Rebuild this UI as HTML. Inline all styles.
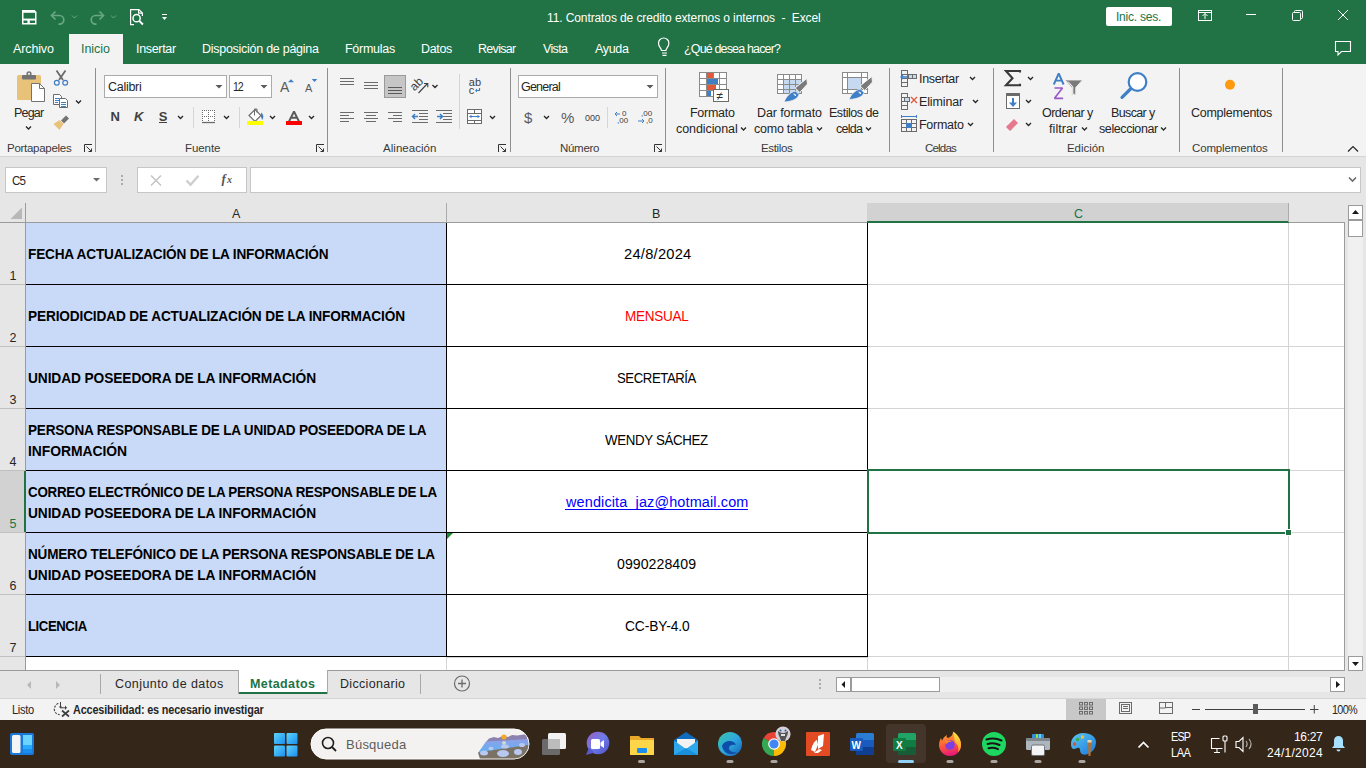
<!DOCTYPE html>
<html><head><meta charset="utf-8"><style>
html,body{margin:0;padding:0;width:1366px;height:768px;overflow:hidden;background:#fff;}
body>div,body>svg{position:absolute;}
.t{position:absolute;font-family:"Liberation Sans",sans-serif;white-space:pre;line-height:1;}
.t{line-height:normal;}
svg{overflow:visible}
</style></head><body>
<div style="left:0px;top:0px;width:1366px;height:64px;background:#217346;"></div><div style="left:69px;top:34px;width:54px;height:30px;background:#f3f3f3;"></div><div style="left:0px;top:64px;width:1366px;height:92px;background:#f3f3f3;"></div><div style="left:0px;top:156px;width:1366px;height:1px;background:#d4d4d4;"></div><div style="left:0px;top:157px;width:1366px;height:46px;background:#e6e6e6;"></div><div style="left:1106px;top:7px;width:66px;height:19px;background:#ffffff;border-radius:2px"></div><svg style="left:0;top:0" width="1366" height="64" viewBox="0 0 1366 64">
<g fill="none" stroke="#fff" stroke-width="1.5">
 <path d="M22.75 10.75h11.5l1.5 1.5v11.5h-13z"/>
</g>
<rect x="23" y="10.5" width="12" height="2.3" fill="#fff"/>
<rect x="23" y="18.6" width="12" height="1.9" fill="#fff"/>
<rect x="27.4" y="20" width="2.4" height="3" fill="#fff"/>
<g fill="none" stroke="#6aa784" stroke-width="1.7">
 <path d="M52.5 15.5h7a4.3 4.3 0 0 1 0 8.6h-1"/>
 <path d="M72 15.5l2.5 2.5 2.5-2.5" stroke-width="1"/>
 <path d="M102.5 15.5h-7a4.3 4.3 0 0 0 0 8.6h1"/>
 <path d="M111 15.5l2.5 2.5 2.5-2.5" stroke-width="1"/>
</g>
<path d="M55.5 11.5l-4 4 4 4" fill="none" stroke="#6aa784" stroke-width="1.7"/>
<path d="M99.5 11.5l4 4-4 4" fill="none" stroke="#6aa784" stroke-width="1.7"/>
<g fill="none" stroke="#fff" stroke-width="1.2">
 <path d="M134 24.6h-3.4V9.6h8.3l3.5 3.5v3"/><path d="M138.6 9.6v3.5h3.5"/>
 <circle cx="136.6" cy="18.2" r="3.6" stroke-width="1.5"/><path d="M139.3 20.9l3.6 3.6" stroke-width="2"/>
</g>
<rect x="162" y="14" width="5" height="1" fill="#fff"/>
<path d="M162 17h5l-2.5 3z" fill="#fff"/>
<!-- window controls -->
<g fill="none" stroke="#fff" stroke-width="1">
 <rect x="1198.5" y="10.5" width="13" height="10"/><path d="M1198.5 12.5h13"/><path d="M1205 19v-5.5M1202.5 16l2.5-2.5 2.5 2.5"/>
 <path d="M1246 14.5h10"/>
 <rect x="1292.5" y="12.5" width="8" height="8" rx="1"/><path d="M1294.5 12.5v-1a1 1 0 0 1 1-1h6a1 1 0 0 1 1 1v6a1 1 0 0 1-1 1h-1"/>
 <path d="M1338 10l10 10M1348 10l-10 10"/>
 <path d="M1335.5 41.5h15v10h-9l-3.5 3.5v-3.5h-2.5z" stroke-width="1.1"/>
</g>
<!-- bulb -->
<g fill="none" stroke="#fff" stroke-width="1.2">
 <path d="M661.5 50.5c-.3-2.5-3-3.8-3-7.3a5.2 5.2 0 0 1 10.4 0c0 3.5-2.7 4.8-3 7.3z"/>
 <path d="M662 53h5M662.5 55.3h4"/>
</g>
</svg><div style="left:95px;top:68px;width:1px;height:84px;background:#8f8f8f;"></div><div style="left:327px;top:68px;width:1px;height:84px;background:#8f8f8f;"></div><div style="left:510px;top:68px;width:1px;height:84px;background:#8f8f8f;"></div><div style="left:665px;top:68px;width:1px;height:84px;background:#8f8f8f;"></div><div style="left:889px;top:68px;width:1px;height:84px;background:#8f8f8f;"></div><div style="left:993px;top:68px;width:1px;height:84px;background:#8f8f8f;"></div><div style="left:1179px;top:68px;width:1px;height:84px;background:#8f8f8f;"></div><div style="left:1282px;top:68px;width:1px;height:84px;background:#8f8f8f;"></div><div style="left:193px;top:107px;width:1px;height:21px;background:#d6d6d6;"></div><div style="left:239px;top:107px;width:1px;height:21px;background:#d6d6d6;"></div><div style="left:459px;top:74px;width:1px;height:55px;background:#d6d6d6;"></div><div style="left:607px;top:107px;width:1px;height:21px;background:#d6d6d6;"></div><div style="left:104px;top:75px;width:121px;height:21px;background:#fff;border:1px solid #ababab"></div><div style="left:229px;top:75px;width:41px;height:21px;background:#fff;border:1px solid #ababab"></div><div style="left:518px;top:75px;width:138px;height:21px;background:#fff;border:1px solid #ababab"></div><svg style="left:0;top:64px" width="1366" height="92" viewBox="0 64 1366 92">
<!-- chevrons -->
<g fill="none" stroke="#262626" stroke-width="1.3">
 <path d="M26 126.5l2.5 2.5 2.5-2.5"/>
 <path d="M76 100.5l2.5 2.5 2.5-2.5"/>
 <path d="M178 116l2.5 2.5 2.5-2.5"/><path d="M224 116l2.5 2.5 2.5-2.5"/><path d="M270 116l2.5 2.5 2.5-2.5"/><path d="M309 116l2.5 2.5 2.5-2.5"/>
 <path d="M432.5 85l2.5 2.5 2.5-2.5"/><path d="M490 116l2.5 2.5 2.5-2.5"/>
 <path d="M544 116l2.5 2.5 2.5-2.5"/>
 <path d="M741 127.5l2.5 2.5 2.5-2.5"/><path d="M817 127.5l2.5 2.5 2.5-2.5"/><path d="M866 127.5l2.5 2.5 2.5-2.5"/>
 <path d="M970 77l2.5 2.5 2.5-2.5"/><path d="M973 100l2.5 2.5 2.5-2.5"/><path d="M968 123l2.5 2.5 2.5-2.5"/>
 <path d="M1028 77l2.5 2.5 2.5-2.5"/><path d="M1026 100l2.5 2.5 2.5-2.5"/><path d="M1026 123l2.5 2.5 2.5-2.5"/>
 <path d="M1082 127.5l2.5 2.5 2.5-2.5"/><path d="M1161 127.5l2.5 2.5 2.5-2.5"/>
 <path d="M1348 151.5l5-5 5 5" stroke-width="1.2"/>
</g>
<!-- combo arrows -->
<g fill="#5a5a5a"><path d="M215.5 85h7l-3.5 3.5z"/><path d="M260.5 85h7l-3.5 3.5z"/><path d="M646.5 85h7l-3.5 3.5z"/></g>
<!-- dialog launchers -->
<g fill="none" stroke="#333" stroke-width="1">
 <path d="M84.5 152v-7.5h7.5 M86.5 146.5l5 5M88.5 151.5h3v-3"/>
 <path d="M316.5 152v-7.5h7.5 M318.5 146.5l5 5M320.5 151.5h3v-3"/>
 <path d="M498.5 152v-7.5h7.5 M500.5 146.5l5 5M502.5 151.5h3v-3"/>
 <path d="M654.5 152v-7.5h7.5 M656.5 146.5l5 5M658.5 151.5h3v-3"/>
</g>
<!-- clipboard -->
<rect x="17" y="75" width="24" height="25" rx="1.5" fill="#e9c27a"/>
<rect x="22" y="75" width="14" height="4.5" rx="1" fill="#737373"/><circle cx="29" cy="73.8" r="2.6" fill="#737373"/><circle cx="29" cy="73.8" r="1.1" fill="#f3f3f3"/>
<path d="M31.5 83.5h8l5 5v13h-13z" fill="#fff" stroke="#737373" stroke-width="1"/>
<path d="M39.5 83.5v5h5" fill="none" stroke="#737373" stroke-width="1"/>
<!-- scissors -->
<g fill="none"><path d="M56.5 70.5l6.5 9.5M65.5 70.5l-6.5 9.5" stroke="#6b6b6b" stroke-width="1.8"/><circle cx="56.8" cy="82.8" r="2.4" stroke="#3f7fc6" stroke-width="1.2"/><circle cx="65.2" cy="82.8" r="2.4" stroke="#3f7fc6" stroke-width="1.2"/></g>
<!-- copy -->
<g stroke="#6b6b6b" stroke-width="1" fill="#fff"><path d="M53.5 94.5h6l2 2v8h-8z"/><path d="M59.5 98.5h6l2 2v7h-8z"/></g>
<g stroke="#3f7fc6" stroke-width="1"><path d="M55 98.5h4M55 100.5h4M55 102.5h3M61 102.5h5M61 104.5h5M61 106.5h5"/></g>
<!-- brush -->
<path d="M53.5 124l6-4 4 4-4 6z" fill="#e9c27a"/><path d="M61 120.5l5-5 3 3-5 5z" fill="#737373"/>
<!-- font grow/shrink -->
<text x="280" y="92" font-family="Liberation Sans" font-size="14" fill="#5a5a5a">A</text><path d="M288 82.2l3-3 3 3z" fill="#3f7fc6"/>
<text x="305" y="92" font-family="Liberation Sans" font-size="11" fill="#5a5a5a">A</text><path d="M311.7 79h5.6l-2.8 3z" fill="#3f7fc6"/>
<!-- N K S -->
<text x="110.5" y="121" font-family="Liberation Sans" font-size="13" font-weight="700" fill="#404040">N</text>
<text x="134" y="121" font-family="Liberation Sans" font-size="13" font-weight="700" font-style="italic" fill="#404040">K</text>
<text x="158.8" y="121" font-family="Liberation Sans" font-size="13" font-weight="700" fill="#404040">S</text><path d="M159 122.5h8" stroke="#404040" stroke-width="1"/>
<!-- borders -->
<rect x="202" y="110" width="13" height="12" fill="#fff"/>
<g stroke="#6b6b6b" stroke-width="1" stroke-dasharray="1 1" fill="none"><path d="M202.5 110v12M208.5 110v12M214.5 110v12M202 110.5h13M202 116.5h13"/></g>
<path d="M202 122.5h13" stroke="#6b6b6b" stroke-width="1.3"/>
<!-- fill color -->
<path d="M249 115.5l6-6 6 6-6 6z" fill="#fff" stroke="#6b6b6b" stroke-width="1.1"/><path d="M254.5 115.5v-6.5h2.5v3.5" stroke="#6b6b6b" stroke-width="1" fill="none"/><path d="M261 112.5c2.5 1.5 3 4.5 1.3 7.5l-1.3-3z" fill="#3f7fc6"/>
<rect x="247" y="121" width="16" height="4" fill="#ffff00"/>
<!-- font color -->
<path d="M289 121.5l5-10 5 10M290.8 117.8h6.4" stroke="#5a5a5a" stroke-width="1.9" fill="none" stroke-linejoin="bevel"/>
<rect x="286" y="121" width="16" height="4" fill="#ff0000"/>
<!-- alignment lines -->
<g stroke="#6b6b6b" stroke-width="1">
 <path d="M340 78.5h14M340 81.5h14M340 84.5h14"/>
 <path d="M364 82.5h14M364 85.5h14M364 88.5h14"/>
 <path d="M340 112.5h14M340 115.5h9M340 118.5h14M340 121.5h9"/>
 <path d="M364 112.5h14M366 115.5h10M364 118.5h14M366 121.5h10"/>
 <path d="M388 112.5h14M393 115.5h9M388 118.5h14M393 121.5h9"/>
 <path d="M412 110.5h16M419 113.5h9M419 116.5h9M419 119.5h9M412 122.5h16"/>
 <path d="M436 110.5h16M443 113.5h9M443 116.5h9M443 119.5h9M436 122.5h16"/>
</g>
<rect x="384.5" y="75.5" width="21" height="22" fill="#c6c6c6" stroke="#9a9a9a" stroke-width="1"/>
<path d="M388 87.5h14M388 90.5h14M388 93.5h14" stroke="#5a5a5a" stroke-width="1"/>
<g stroke="#3f7fc6" stroke-width="1.5" fill="none"><path d="M418 116.5h-5M415 114l-2.5 2.5 2.5 2.5"/><path d="M437 116.5h5M440 114l2.5 2.5-2.5 2.5"/></g>
<!-- orientation -->
<text x="0" y="0" font-family="Liberation Sans" font-size="12" fill="#404040" transform="translate(414.5 91.5) rotate(-45)">ab</text>
<path d="M418.5 93l9-9.5M424 83.5h3.8v3.8" stroke="#404040" fill="none" stroke-width="1.1"/>
<!-- wrap -->
<text x="468.8" y="86.2" font-family="Liberation Sans" font-size="11" fill="#404040">ab</text>
<text x="468.8" y="93.5" font-family="Liberation Sans" font-size="11" fill="#404040">c</text>
<path d="M479.5 88v2.5h-3.5" stroke="#3f7fc6" fill="none" stroke-width="1.2"/><path d="M477 88.5l-2 2 2 2z" fill="#3f7fc6"/>
<!-- merge -->
<g stroke="#6b6b6b" fill="none" stroke-width="1"><rect x="467.5" y="109.5" width="14" height="14" fill="#fff"/><path d="M467.5 113.5h14M467.5 120.5h14M474.5 109.5v4M474.5 120.5v3"/></g>
<path d="M469.5 116.5h10M471.5 115l-1.5 1.5 1.5 1.5M477.5 115l1.5 1.5-1.5 1.5" stroke="#3f7fc6" fill="none" stroke-width="1"/>
<!-- number -->
<text x="524" y="123" font-family="Liberation Sans" font-size="15" fill="#5a5a5a">$</text>
<text x="561" y="123" font-family="Liberation Sans" font-size="15" fill="#5a5a5a">%</text>
<text x="585" y="121" font-family="Liberation Sans" font-size="9" fill="#404040">000</text>
<text x="622" y="116" font-family="Liberation Sans" font-size="8" fill="#404040">0</text><text x="617" y="123" font-family="Liberation Sans" font-size="8" fill="#404040">,00</text>
<path d="M620 114h-5M617 112l-2 2 2 2" stroke="#3f7fc6" fill="none" stroke-width="1"/>
<text x="641" y="116" font-family="Liberation Sans" font-size="8" fill="#404040">,00</text><text x="646" y="123" font-family="Liberation Sans" font-size="8" fill="#404040">,0</text>
<path d="M638 121h6M642 119l2 2-2 2" stroke="#3f7fc6" fill="none" stroke-width="1"/>
<!-- conditional formatting -->
<rect x="699.5" y="72.5" width="27" height="24" fill="#fff" stroke="#8a8a8a" stroke-width="1"/>
<g stroke="#8a8a8a" stroke-width="1"><path d="M706.5 72.5v24M713.5 72.5v24M719.5 72.5v24M699.5 78.5h27M699.5 84.5h27M699.5 90.5h27"/></g>
<rect x="707" y="73" width="6" height="5" fill="#e05a3a"/><rect x="707" y="79" width="11" height="5" fill="#3f7fc6"/><rect x="707" y="85" width="9" height="5" fill="#e05a3a"/><rect x="707" y="91" width="4" height="5" fill="#3f7fc6"/>
<rect x="713.5" y="89.5" width="15" height="12" fill="#fff" stroke="#6b6b6b"/><text x="716.5" y="100" font-family="Liberation Sans" font-size="12" fill="#303030">≠</text>
<!-- format as table -->
<rect x="778" y="75" width="24" height="19" fill="#fff"/>
<rect x="784" y="80" width="17" height="13" fill="#c5d9f1"/>
<g fill="none" stroke="#8a8a8a" stroke-width="1"><rect x="777.5" y="74.5" width="24" height="19"/><path d="M777.5 79.5h24M777.5 84.5h24M777.5 89.5h24M783.5 74.5v19M789.5 74.5v19M795.5 74.5v19"/></g>
<path d="M806.8 78.5l.7 5.5-7.8 8.5-4.6-4.6z" fill="#7a7a7a" stroke="#f3f3f3" stroke-width="1"/>
<path d="M795.5 91l3.5 3.5c-1 4-6 7-15 7.5 2-5 6-10 11.5-11z" fill="#3f7fc6" stroke="#f3f3f3" stroke-width=".8"/><path d="M793.5 94c1 0 2 1 2 2" stroke="#fff" stroke-width="1.2" fill="none"/>
<!-- cell styles -->
<rect x="842.5" y="72.5" width="25" height="21" fill="#fff" stroke="#8a8a8a" stroke-width="1"/>
<rect x="848" y="78" width="13" height="11" fill="#c5d9f1"/>
<g fill="none" stroke="#8a8a8a" stroke-width="1"><path d="M842.5 77.5h25M842.5 89.5h25M847.5 72.5v21M861.5 72.5v21"/></g>
<path d="M871.8 76.5l.7 5.5-7.8 8.5-4.6-4.6z" fill="#7a7a7a" stroke="#f3f3f3" stroke-width="1"/>
<path d="M860.5 89l3.5 3.5c-1 4-6 6.5-15 7 2-5 6-9.5 11.5-10.5z" fill="#3f7fc6" stroke="#f3f3f3" stroke-width=".8"/><path d="M858.5 92c1 0 2 1 2 2" stroke="#fff" stroke-width="1.2" fill="none"/>
<!-- insert/delete/format cells -->
<g fill="none" stroke="#6b6b6b" stroke-width="1">
 <rect x="901.5" y="70.5" width="6" height="4"/><rect x="901.5" y="74.5" width="6" height="4"/><rect x="901.5" y="78.5" width="6" height="4"/><rect x="901.5" y="82.5" width="6" height="4"/>
 <rect x="908.5" y="74.5" width="4" height="4" fill="#c5d9f1"/><rect x="912.5" y="74.5" width="4" height="4" fill="#c5d9f1"/>
 <rect x="901.5" y="93.5" width="6" height="4"/><rect x="901.5" y="97.5" width="6" height="4"/><rect x="901.5" y="101.5" width="6" height="4"/><rect x="901.5" y="105.5" width="6" height="4"/>
 <rect x="904.5" y="97.5" width="5" height="4" fill="#c5d9f1"/>
 <rect x="901.5" y="119.5" width="15" height="12"/><path d="M901.5 123.5h15M901.5 127.5h15M906.5 119.5v12M911.5 119.5v12"/>
</g>
<path d="M908 77h-7M903 75l-2 2 2 2" stroke="#3f7fc6" fill="none" stroke-width="1.3"/>
<path d="M911 97l6 6M917 97l-6 6" stroke="#e05a3a" stroke-width="1.3"/>
<rect x="906" y="123" width="6" height="5" fill="#3f7fc6"/>
<path d="M901.5 116.5h15M901.5 115v3M916.5 115v3" stroke="#3f7fc6" stroke-width="1"/>
<!-- sigma -->
<path d="M1020 72.5v-1.5h-14l6.5 7.2-6.5 7h14v-1.5" fill="none" stroke="#3a3a3a" stroke-width="2.1" stroke-linejoin="miter"/>
<!-- fill down -->
<rect x="1006.5" y="93.5" width="13" height="15" fill="#fff" stroke="#6b6b6b"/><rect x="1006" y="93" width="14" height="3" fill="#6b6b6b"/>
<path d="M1013 98v6" stroke="#3f7fc6" stroke-width="2" fill="none"/><path d="M1009 102.5h8l-4 4.5z" fill="#3f7fc6"/>
<!-- eraser -->
<path d="M1007 126l7-7 4 4-7 7z" fill="#e5788e"/><path d="M1006 127l2-2 4 4-2 2z" fill="#e5788e"/>
<!-- sort -->
<path d="M1053.8 84.5l4.9-11 4.9 11M1055.5 80.6h6.4" stroke="#3f7fc6" stroke-width="1.9" fill="none" stroke-linejoin="bevel"/>
<path d="M1054.5 88h8l-8 10.3h8.6" stroke="#9b59c8" stroke-width="1.7" fill="none" stroke-linejoin="bevel"/>
<path d="M1065 80h17.5l-6.8 7.5v7.5h-3.8v-7.5z" fill="#7a7a7a" stroke="#f3f3f3" stroke-width=".8"/><path d="M1068 81.5l4.8 5.3v7.5h1.8" stroke="#fff" stroke-width="1" fill="none"/>
<!-- search -->
<circle cx="1137.5" cy="82" r="8.8" fill="#fff" stroke="#3f7fc6" stroke-width="2.2"/><path d="M1130.5 89l-8.5 8.3" stroke="#3f7fc6" stroke-width="3.2" stroke-linecap="round"/>
<!-- add-ins dot -->
<circle cx="1230" cy="84.8" r="5" fill="#ff9a10"/>
</svg><div style="left:5px;top:167px;width:100px;height:24px;background:#fff;border:1px solid #c6c6c6"></div><div style="left:137px;top:167px;width:108px;height:24px;background:#fff;border:1px solid #c6c6c6"></div><svg style="left:0;top:160px" width="260" height="40" viewBox="0 160 260 40"><path d="M93 178h7l-3.5 3.5z" fill="#6b6b6b"/><g fill="#ababab"><rect x="121" y="175" width="2" height="2"/><rect x="121" y="179" width="2" height="2"/><rect x="121" y="183" width="2" height="2"/></g><path d="M151 175.5l10 10M161 175.5l-10 10" stroke="#c4c4c4" stroke-width="1.5"/><path d="M186.5 180.5l4 4.3 8-9" stroke="#cdcdcd" stroke-width="2.3" fill="none"/><text x="221.5" y="183" font-family="Liberation Serif" font-style="italic" font-weight="700" font-size="13" fill="#555">f</text><text x="227" y="183" font-family="Liberation Serif" font-style="italic" font-weight="700" font-size="10" fill="#555">x</text></svg><div style="left:250px;top:167px;width:1109px;height:24px;background:#fff;border:1px solid #c6c6c6"></div><svg style="left:1340px;top:170px" width="26" height="20" viewBox="1340 170 26 20"><path d="M1349 177.5l3.5 3.5 3.5-3.5" stroke="#6b6b6b" stroke-width="1.6" fill="none"/></svg><div style="left:0px;top:203px;width:1345px;height:19px;background:#e6e6e6;"></div><div style="left:867px;top:203px;width:421px;height:18px;background:#d2d2d2;"></div><div style="left:867px;top:221px;width:422px;height:2px;background:#217346;"></div><div style="left:25px;top:203px;width:1px;height:468px;background:#9b9b9b;"></div><div style="left:0px;top:222px;width:867px;height:1px;background:#9b9b9b;"></div><div style="left:1289px;top:222px;width:55px;height:1px;background:#9b9b9b;"></div><div style="left:446px;top:203px;width:1px;height:19px;background:#ababab;"></div><div style="left:1288px;top:203px;width:1px;height:19px;background:#ababab;"></div><svg style="left:0;top:200px" width="30" height="24" viewBox="0 200 30 24"><path d="M22 207.5v11.5h-11.5z" fill="#b8b8b8"/></svg><div style="left:0px;top:223px;width:25px;height:447px;background:#e6e6e6;"></div><div style="left:0px;top:471px;width:24px;height:61px;background:#d2d2d2;"></div><div style="left:24px;top:471px;width:2px;height:61px;background:#217346;"></div><div style="left:0px;top:284px;width:25px;height:1px;background:#c0c0c0;"></div><div style="left:0px;top:346px;width:25px;height:1px;background:#c0c0c0;"></div><div style="left:0px;top:408px;width:25px;height:1px;background:#c0c0c0;"></div><div style="left:0px;top:470px;width:25px;height:1px;background:#c0c0c0;"></div><div style="left:0px;top:532px;width:25px;height:1px;background:#c0c0c0;"></div><div style="left:0px;top:594px;width:25px;height:1px;background:#c0c0c0;"></div><div style="left:0px;top:656px;width:25px;height:1px;background:#c0c0c0;"></div><div style="left:26px;top:223px;width:420px;height:433px;background:#c9daf8;"></div><div style="left:867px;top:284px;width:477px;height:1px;background:#d4d4d4;"></div><div style="left:867px;top:346px;width:477px;height:1px;background:#d4d4d4;"></div><div style="left:867px;top:408px;width:477px;height:1px;background:#d4d4d4;"></div><div style="left:867px;top:470px;width:477px;height:1px;background:#d4d4d4;"></div><div style="left:867px;top:532px;width:477px;height:1px;background:#d4d4d4;"></div><div style="left:867px;top:594px;width:477px;height:1px;background:#d4d4d4;"></div><div style="left:867px;top:656px;width:477px;height:1px;background:#d4d4d4;"></div><div style="left:867px;top:718px;width:477px;height:1px;background:#d4d4d4;"></div><div style="left:1288px;top:223px;width:1px;height:448px;background:#d4d4d4;"></div><div style="left:446px;top:657px;width:421px;height:1px;background:#d4d4d4;"></div><div style="left:446px;top:657px;width:1px;height:14px;background:#d4d4d4;"></div><div style="left:867px;top:657px;width:1px;height:14px;background:#d4d4d4;"></div><div style="left:26px;top:284px;width:841px;height:1px;background:#000;"></div><div style="left:26px;top:346px;width:841px;height:1px;background:#000;"></div><div style="left:26px;top:408px;width:841px;height:1px;background:#000;"></div><div style="left:26px;top:470px;width:841px;height:1px;background:#000;"></div><div style="left:26px;top:532px;width:841px;height:1px;background:#000;"></div><div style="left:26px;top:594px;width:841px;height:1px;background:#000;"></div><div style="left:26px;top:656px;width:841px;height:1px;background:#000;"></div><div style="left:446px;top:223px;width:1px;height:434px;background:#000;"></div><div style="left:867px;top:223px;width:1px;height:434px;background:#000;"></div><div style="left:1344px;top:222px;width:1px;height:449px;background:#9b9b9b;"></div><div style="left:0px;top:670px;width:1345px;height:1px;background:#9b9b9b;"></div><div style="left:867px;top:469px;width:423px;height:2px;background:#217346;"></div><div style="left:867px;top:532px;width:419px;height:2px;background:#217346;"></div><div style="left:867px;top:469px;width:2px;height:65px;background:#217346;"></div><div style="left:1288px;top:469px;width:2px;height:61px;background:#217346;"></div><div style="left:1286px;top:530px;width:5px;height:5px;background:#217346;outline:1px solid #fff"></div><svg style="left:446px;top:532px" width="8" height="8" viewBox="446 532 8 8"><path d="M447 533h6l-6 6z" fill="#1d8a2f"/></svg><div style="left:565px;top:509px;width:183px;height:1px;background:#0000ff;"></div><div style="left:1345px;top:203px;width:21px;height:468px;background:#e6e6e6;"></div><div style="left:1348px;top:221px;width:15px;height:435px;background:#f0f0f0;"></div><div style="left:1348px;top:205px;width:15px;height:15px;background:#fff;box-sizing:border-box;border:1px solid #9b9b9b"></div><div style="left:1348px;top:220px;width:15px;height:17px;background:#fff;box-sizing:border-box;border:1px solid #9b9b9b"></div><div style="left:1348px;top:656px;width:15px;height:15px;background:#fff;box-sizing:border-box;border:1px solid #9b9b9b"></div><svg style="left:1345px;top:200px" width="21" height="475" viewBox="1345 200 21 475"><path d="M1352 214h7l-3.5-4z" fill="#1a1a1a"/><path d="M1352 662h7l-3.5 4z" fill="#1a1a1a"/></svg><div style="left:0px;top:671px;width:1366px;height:27px;background:#e6e6e6;"></div><div style="left:238px;top:670px;width:90px;height:24px;background:#fff;box-sizing:border-box;border:1px solid #a8a8a8;border-top:none"></div><div style="left:239px;top:692px;width:88px;height:2px;background:#217346;"></div><div style="left:100px;top:674px;width:1px;height:20px;background:#a8a8a8;"></div><div style="left:420px;top:674px;width:1px;height:20px;background:#a8a8a8;"></div><svg style="left:0;top:670px" width="480" height="28" viewBox="0 670 480 28"><path d="M31 681v8l-4-4z" fill="#b8b8b8"/><path d="M56 681v8l4-4z" fill="#b8b8b8"/><circle cx="462" cy="683.5" r="7.5" fill="none" stroke="#6b6b6b" stroke-width="1.2"/><path d="M458 683.5h8M462 679.5v8" stroke="#6b6b6b" stroke-width="1.3"/></svg><svg style="left:810px;top:670px" width="30" height="28" viewBox="810 670 30 28"><g fill="#ababab"><rect x="819" y="679" width="2" height="2"/><rect x="819" y="683" width="2" height="2"/><rect x="819" y="687" width="2" height="2"/></g></svg><div style="left:836px;top:677px;width:509px;height:15px;background:#f0f0f0;"></div><div style="left:836px;top:677px;width:15px;height:15px;background:#fff;box-sizing:border-box;border:1px solid #9b9b9b"></div><div style="left:851px;top:677px;width:89px;height:15px;background:#fff;box-sizing:border-box;border:1px solid #9b9b9b"></div><div style="left:1330px;top:677px;width:15px;height:15px;background:#fff;box-sizing:border-box;border:1px solid #9b9b9b"></div><svg style="left:836px;top:677px" width="510" height="15" viewBox="836 677 510 15"><path d="M845 681v7l-3.5-3.5z" fill="#1a1a1a"/><path d="M1336 681v7l4-3.5z" fill="#1a1a1a"/></svg><div style="left:0px;top:698px;width:1366px;height:1px;background:#d4d4d4;"></div><div style="left:0px;top:699px;width:1366px;height:21px;background:#f3f3f3;"></div><svg style="left:50px;top:700px" width="24" height="20" viewBox="50 700 24 20"><path d="M58.3 703.3Q54.3 705.5 54.3 709.5Q54.8 714 59.6 714.6" fill="none" stroke="#404040" stroke-width="1.1" stroke-dasharray="2.2 1.3"/><path d="M60.5 702v5.8h4.5" fill="none" stroke="#404040" stroke-width="1"/><path d="M58.8 706.6l1.7 1.8 1.7-1.8z M65 705.5l2 2.3-2 2.2z" fill="#404040"/><path d="M62 710.5l7 6M69 710.5l-7 6" stroke="#404040" stroke-width="1.7"/></svg><div style="left:1066px;top:699px;width:40px;height:21px;background:#c8c8c8;"></div><svg style="left:1060px;top:699px" width="306" height="21" viewBox="1060 699 306 21">
<g fill="#6b6b6b"><rect x="1079" y="702" width="4" height="3.5"/><rect x="1084" y="702" width="4" height="3.5"/><rect x="1089" y="702" width="4" height="3.5"/><rect x="1079" y="706.5" width="4" height="3.5"/><rect x="1084" y="706.5" width="4" height="3.5"/><rect x="1089" y="706.5" width="4" height="3.5"/><rect x="1079" y="711" width="4" height="3.5"/><rect x="1084" y="711" width="4" height="3.5"/><rect x="1089" y="711" width="4" height="3.5"/></g><g fill="#c8c8c8"><rect x="1080" y="703" width="2" height="1.5"/><rect x="1085" y="703" width="2" height="1.5"/><rect x="1090" y="703" width="2" height="1.5"/><rect x="1080" y="707.5" width="2" height="1.5"/><rect x="1085" y="707.5" width="2" height="1.5"/><rect x="1090" y="707.5" width="2" height="1.5"/><rect x="1080" y="712" width="2" height="1.5"/><rect x="1085" y="712" width="2" height="1.5"/><rect x="1090" y="712" width="2" height="1.5"/></g>
<g fill="none" stroke="#6b6b6b" stroke-width="1"><rect x="1119.5" y="702.5" width="12" height="11"/><rect x="1121.5" y="704.5" width="8" height="7"/><path d="M1123 706.5h5M1123 708.5h5"/></g>
<g fill="none" stroke="#6b6b6b" stroke-width="1"><rect x="1159.5" y="702.5" width="13" height="11"/><path d="M1165.5 702.5v5.5h-6M1166 707.5h6.5"/></g>
<path d="M1192 709.5h8M1205 709.5h100M1310 709.5h8.5M1314.25 705v8.5" stroke="#404040" stroke-width="1"/>
<rect x="1253" y="704" width="5" height="10" fill="#5a5a5a"/>
</svg><div style="left:0px;top:720px;width:1366px;height:48px;background:#35261a;"></div><svg style="left:0;top:720px" width="1366" height="48" viewBox="0 720 1366 48">
<defs>
<linearGradient id="wg" x1="0" y1="0" x2="1" y2="1"><stop offset="0" stop-color="#5fd4fb"/><stop offset="1" stop-color="#1a8ff0"/></linearGradient>
<linearGradient id="edg" x1="0" y1="0" x2="1" y2="1"><stop offset="0" stop-color="#38c6a5"/><stop offset=".5" stop-color="#2fa8e0"/><stop offset="1" stop-color="#1460b8"/></linearGradient>
</defs>
<!-- widgets -->
<rect x="10" y="733" width="24" height="22" rx="2" fill="#1a78d8"/>
<rect x="12" y="735" width="8.5" height="18" rx="1.5" fill="#f4f4f4"/>
<rect x="23" y="735" width="9" height="10" fill="#6ad4ff"/><rect x="23" y="745" width="9" height="4" fill="#28aaff"/><rect x="23" y="749" width="9" height="4" fill="#1a8ff0"/>
<!-- start -->
<rect x="274" y="733" width="11" height="11" rx="1" fill="url(#wg)"/><rect x="286.5" y="733" width="11" height="11" rx="1" fill="url(#wg)"/>
<rect x="274" y="745.5" width="11" height="11" rx="1" fill="url(#wg)"/><rect x="286.5" y="745.5" width="11" height="11" rx="1" fill="url(#wg)"/>
<!-- search pill -->
<rect x="311" y="729" width="218" height="30" rx="15" fill="#f3f2f0" stroke="#fff" stroke-width="1"/>
<circle cx="328" cy="743" r="5.5" fill="none" stroke="#1f1f1f" stroke-width="1.6"/><path d="M332 747l4 4" stroke="#1f1f1f" stroke-width="1.8"/>
<defs><clipPath id="pc"><rect x="311.5" y="729.5" width="217" height="29" rx="14.5"/></clipPath><linearGradient id="sea" x1="0" y1="0" x2="0" y2="1"><stop offset="0" stop-color="#8fa0ea"/><stop offset="1" stop-color="#5fb2f0"/></linearGradient></defs>
<g clip-path="url(#pc)">
<path d="M489 738.5L494 737l4 1 5-2 5 1 4-2 5 0.5 10-1.5V741L486 742z" fill="#8c82b0"/>
<path d="M486 741.5L530 739V745L478 753z" fill="url(#sea)"/>
<path d="M478 752.5L530 744.5V759H480z" fill="#7a7264"/>
<circle cx="504" cy="737" r="2.6" fill="#f5a623"/>
<ellipse cx="504" cy="743" rx="2" ry="2" fill="#f0f0c0" opacity=".7"/>
<g fill="#b8c8f0"><ellipse cx="484" cy="753" rx="4" ry="2.5"/><ellipse cx="491" cy="748.5" rx="2.5" ry="1.8"/><ellipse cx="505" cy="746.5" rx="4" ry="2"/><ellipse cx="503" cy="753.5" rx="6" ry="3.5"/><ellipse cx="518" cy="752" rx="4" ry="3"/><ellipse cx="522" cy="745" rx="3" ry="2"/></g>
</g>
<!-- task view -->
<rect x="542" y="739" width="18" height="16" rx="1.5" fill="#6a6a6a"/><rect x="548" y="733" width="18" height="16" rx="1.5" fill="#f2f2f2"/><rect x="548" y="739" width="12" height="10" fill="#bcbcbc"/>
<!-- teams/meet -->
<defs><linearGradient id="tmg" x1="0" y1="0" x2="1" y2="1"><stop offset="0" stop-color="#9a5ec0"/><stop offset=".5" stop-color="#6f7ce8"/><stop offset="1" stop-color="#5050c8"/></linearGradient></defs><circle cx="598" cy="743" r="11.3" fill="url(#tmg)"/><path d="M586 755l3-7.5 5.5 5z" fill="#5a5ad0"/><rect x="591" y="739" width="9" height="10" rx="1.5" fill="#fff"/><path d="M600.5 742.5l3.5-2.5v8l-3.5-2.5z" fill="#fff"/>
<!-- explorer -->
<path d="M630 736h9l2 2h13v17h-24z" fill="#e8a82a"/><rect x="630" y="740" width="24" height="15" rx="1" fill="#ffd54a"/><rect x="637" y="748" width="10" height="5" rx="1" fill="#1a8ff0"/>
<rect x="638" y="760" width="7" height="3" rx="1.5" fill="#a8a4a0"/>
<!-- mail -->
<path d="M674 740l12-8 12 8v15h-24z" fill="#0f6cbd"/><path d="M677 739h18v6l-9 6-9-6z" fill="#f2f2f2"/><path d="M674 740.5l12 8.5 12-8.5V755h-24z" fill="#2ea8ec"/><path d="M674 755l12-7 12 7z" fill="#1a90dd"/>
<!-- edge -->
<circle cx="730" cy="744" r="12" fill="url(#edg)"/><path d="M722 746c2-6 12-7 14-1-3-1-7 0-7 3 0 3 4 5 8 4-4 4-13 3-15-6z" fill="#0d4fa8"/>
<rect x="726.5" y="760" width="7" height="3" rx="1.5" fill="#a8a4a0"/>
<!-- chrome -->
<path d="M774 744L763.6 738A12 12 0 0 1 784.4 738Z" fill="#ea4335"/>
<path d="M774 744L784.4 738A12 12 0 0 1 774 756Z" fill="#fbbc05"/>
<path d="M774 744L774 756A12 12 0 0 1 763.6 738Z" fill="#34a853"/>
<circle cx="774" cy="744" r="5.8" fill="#fff"/><circle cx="774" cy="744" r="4.6" fill="#4285f4"/>
<circle cx="783" cy="734" r="7.6" fill="#d4d2d8"/><path d="M778 731c2 1 3 2 5 2s3-1 5-2c0 3-1 5-2 7l-1 3h-4l-1-3c-1-2-2-4-2-7z" fill="#555"/><circle cx="780.5" cy="730.5" r="1" fill="#2a5fa8"/><circle cx="785.5" cy="730.5" r="1" fill="#2a5fa8"/><path d="M781 734h4v2h-4z" fill="#e0e0e0"/>
<rect x="770.5" y="760" width="7" height="3" rx="1.5" fill="#a8a4a0"/>
<!-- acrobat -->
<rect x="806" y="732" width="24" height="24" rx="1" fill="#e34b24"/><path d="M811 750c1-4 3-9 6-10l1 5-3 7z" fill="#fff"/><path d="M818 736l6-2-1 12-5 3z" fill="#fff"/><path d="M814 753l5-4 3 1-4 3z" fill="#fff"/>
<!-- word -->
<rect x="856" y="733" width="18" height="22" rx="1.5" fill="#2b7cd3"/><rect x="856" y="740" width="18" height="7" fill="#185abd"/><rect x="856" y="747" width="18" height="8" fill="#103f91"/>
<rect x="850" y="738" width="13" height="13" rx="1" fill="#185abd"/><text x="851.5" y="748.5" font-family="Liberation Sans" font-weight="700" font-size="10" fill="#fff">W</text>
<!-- excel active -->
<rect x="886" y="724" width="40" height="39" rx="4" fill="#4a3c31" opacity=".7"/>
<rect x="898" y="733" width="18" height="22" rx="1.5" fill="#21a366"/><rect x="898" y="740" width="18" height="7" fill="#107c41"/><rect x="898" y="747" width="18" height="8" fill="#185c37"/>
<rect x="893" y="738" width="13" height="13" rx="1" fill="#107c41"/><text x="896" y="748.5" font-family="Liberation Sans" font-weight="700" font-size="10" fill="#fff">X</text>
<rect x="898" y="760" width="16" height="3" rx="1.5" fill="#8fd0f5"/>
<!-- firefox -->
<defs><linearGradient id="ffg" x1="0.2" y1="0" x2="0.4" y2="1"><stop offset="0" stop-color="#ffb02e"/><stop offset=".55" stop-color="#ff5a3a"/><stop offset="1" stop-color="#e8177a"/></linearGradient>
<linearGradient id="ffy" x1="0" y1="0" x2="0" y2="1"><stop offset="0" stop-color="#ffe24a"/><stop offset="1" stop-color="#ff9a1f"/></linearGradient></defs>
<path d="M953 732c5 3 8 8 8 13a11 11 0 0 1-22 0c0-3 1-5 2-7l1 3c1-3 3-5 5-6-1 2 0 3 1 3 3-1 5-3 5-6z" fill="url(#ffg)"/>
<path d="M953 731.5c4 2.5 8 7 8 13 0 3-1 6-3 8 1-4 0-8-3-10-1-4-1-8-2-11z" fill="url(#ffy)"/>
<circle cx="950" cy="745" r="4.8" fill="#7b3fe4"/><path d="M945 741.5c2-1.5 5-1.5 7 0-3 0-5 1-6 3z" fill="#ff8a2a"/>
<rect x="946.5" y="760" width="7" height="3" rx="1.5" fill="#a8a4a0"/>
<!-- spotify -->
<circle cx="994" cy="744" r="12" fill="#1ed760"/><path d="M986.5 739.5c5-1.6 10.5-1.2 15 1M987.5 744c4-1.2 8.5-.8 12 1M988.5 748.3c3.2-.9 6.5-.5 9.5.8" stroke="#191414" stroke-width="2" fill="none" stroke-linecap="round"/>
<rect x="990.5" y="760" width="7" height="3" rx="1.5" fill="#a8a4a0"/>
<!-- printer -->
<rect x="1032" y="734" width="12" height="6" rx="1" fill="#2e8fe0"/><rect x="1036" y="734" width="2" height="6" fill="#9be03a"/><rect x="1039" y="734" width="2" height="6" fill="#6ad4ff"/>
<rect x="1026" y="738" width="24" height="12" rx="1.5" fill="#aeb6bd"/><rect x="1026" y="738" width="24" height="3" rx="1" fill="#7f878e"/>
<rect x="1031.5" y="745" width="13" height="10.5" rx="1.5" fill="#f4f4f4" stroke="#6f7378" stroke-width="1"/>
<rect x="1034.5" y="760" width="7" height="3" rx="1.5" fill="#a8a4a0"/>
<!-- paint -->
<defs><linearGradient id="pg" x1="0" y1="0" x2="1" y2="1"><stop offset="0" stop-color="#5cc8f5"/><stop offset="1" stop-color="#1a78d8"/></linearGradient></defs>
<path d="M1083 733c-7 0-12 5-12 11 0 3 1 5 3 5 2 0 3-2 5-1s0 4 3 6c2 1 5 1 8-1 5-3 6-8 6-11 0-5-5-9-13-9z" fill="url(#pg)"/>
<circle cx="1074.5" cy="744" r="1.7" fill="#e0502a"/><circle cx="1077.5" cy="739.5" r="1.7" fill="#3cae3c"/><circle cx="1082.5" cy="737" r="1.7" fill="#f5c02e"/>
<path d="M1088 741h3l-.5 15h-2z" fill="#b8702a"/><rect x="1087.5" y="740" width="4" height="2.5" fill="#e8d8b0"/>
<rect x="1078.5" y="760" width="7" height="3" rx="1.5" fill="#a8a4a0"/>
<!-- tray -->
<path d="M1138.5 747.5l5-5 5 5" stroke="#fff" stroke-width="1.7" fill="none"/>
<g stroke="#fff" stroke-width="1.1" fill="none"><path d="M1222.5 748.5h-11v-10h8"/><path d="M1214 752.5h6M1217 748.5v4"/><rect x="1223" y="736" width="4" height="5" rx="1"/><path d="M1225 741v11.5"/></g>
<g stroke="#fff" stroke-width="1.1" fill="none"><path d="M1236 741.5h3l4-4v14l-4-4h-3z"/><path d="M1246 741c1.5 2 1.5 4 0 6M1249 739c2.5 3 2.5 7 0 10" stroke="#bbb"/></g>
<path d="M1338.5 736a4.5 4.5 0 0 1 4.5 4.5v5l2 2.5h-13l2-2.5v-5a4.5 4.5 0 0 1 4.5-4.5z" fill="#a8e0ff"/><path d="M1336.5 749.5a2 2 0 0 0 4 0" fill="#a8e0ff"/>
</svg>
<div class="t" style="left:547.00px;top:11px;font-size:12px;font-weight:400;color:#ffffff;letter-spacing:-0.105px;">11. Contratos de credito externos o internos  -  Excel</div><div class="t" style="left:1116.00px;top:10px;font-size:12px;font-weight:400;color:#217346;letter-spacing:-0.224px;">Inic. ses.</div><div class="t" style="left:13.00px;top:42px;font-size:12.5px;font-weight:400;color:#ffffff;letter-spacing:-0.122px;">Archivo</div><div class="t" style="left:136.00px;top:42px;font-size:12.5px;font-weight:400;color:#ffffff;letter-spacing:-0.316px;">Insertar</div><div class="t" style="left:202.00px;top:42px;font-size:12.5px;font-weight:400;color:#ffffff;letter-spacing:-0.268px;">Disposición de página</div><div class="t" style="left:345.00px;top:42px;font-size:12.5px;font-weight:400;color:#ffffff;letter-spacing:-0.263px;">Fórmulas</div><div class="t" style="left:421.00px;top:42px;font-size:12.5px;font-weight:400;color:#ffffff;letter-spacing:-0.351px;">Datos</div><div class="t" style="left:478.00px;top:42px;font-size:12.5px;font-weight:400;color:#ffffff;letter-spacing:-0.701px;">Revisar</div><div class="t" style="left:543.00px;top:42px;font-size:12.5px;font-weight:400;color:#ffffff;letter-spacing:-0.653px;">Vista</div><div class="t" style="left:595.00px;top:42px;font-size:12.5px;font-weight:400;color:#ffffff;letter-spacing:-0.316px;">Ayuda</div><div class="t" style="left:684.00px;top:42px;font-size:12.5px;font-weight:400;color:#ffffff;letter-spacing:-0.846px;">¿Qué desea hacer?</div><div class="t" style="left:81.00px;top:42px;font-size:12.5px;font-weight:400;color:#217346;letter-spacing:-0.046px;">Inicio</div><div class="t" style="left:7.00px;top:142px;font-size:11.5px;font-weight:400;color:#3a3a3a;letter-spacing:-0.275px;">Portapapeles</div><div class="t" style="left:185.00px;top:142px;font-size:11.5px;font-weight:400;color:#3a3a3a;letter-spacing:-0.081px;">Fuente</div><div class="t" style="left:383.00px;top:142px;font-size:11.5px;font-weight:400;color:#3a3a3a;letter-spacing:0.037px;">Alineación</div><div class="t" style="left:560.00px;top:142px;font-size:11.5px;font-weight:400;color:#3a3a3a;letter-spacing:-0.301px;">Número</div><div class="t" style="left:761.00px;top:142px;font-size:11.5px;font-weight:400;color:#3a3a3a;letter-spacing:-0.354px;">Estilos</div><div class="t" style="left:925.00px;top:142px;font-size:11.5px;font-weight:400;color:#3a3a3a;letter-spacing:-0.809px;">Celdas</div><div class="t" style="left:1067.00px;top:142px;font-size:11.5px;font-weight:400;color:#3a3a3a;letter-spacing:-0.054px;">Edición</div><div class="t" style="left:1192.00px;top:142px;font-size:11.5px;font-weight:400;color:#3a3a3a;letter-spacing:-0.144px;">Complementos</div><div class="t" style="left:14.00px;top:106px;font-size:12.5px;font-weight:400;color:#262626;letter-spacing:-0.798px;">Pegar</div><div class="t" style="left:690.00px;top:106px;font-size:12.5px;font-weight:400;color:#262626;letter-spacing:-0.265px;">Formato</div><div class="t" style="left:676.00px;top:122px;font-size:12.5px;font-weight:400;color:#262626;letter-spacing:-0.077px;">condicional</div><div class="t" style="left:757.00px;top:106px;font-size:12.5px;font-weight:400;color:#262626;letter-spacing:-0.104px;">Dar formato</div><div class="t" style="left:754.00px;top:122px;font-size:12.5px;font-weight:400;color:#262626;letter-spacing:-0.244px;">como tabla</div><div class="t" style="left:829.00px;top:106px;font-size:12.5px;font-weight:400;color:#262626;letter-spacing:-0.471px;">Estilos de</div><div class="t" style="left:836.00px;top:122px;font-size:12.5px;font-weight:400;color:#262626;letter-spacing:-0.733px;">celda</div><div class="t" style="left:1042.00px;top:106px;font-size:12.5px;font-weight:400;color:#262626;letter-spacing:-0.541px;">Ordenar y</div><div class="t" style="left:1049.00px;top:122px;font-size:12.5px;font-weight:400;color:#262626;letter-spacing:0.064px;">filtrar</div><div class="t" style="left:1111.00px;top:106px;font-size:12.5px;font-weight:400;color:#262626;letter-spacing:-0.625px;">Buscar y</div><div class="t" style="left:1099.00px;top:122px;font-size:12.5px;font-weight:400;color:#262626;letter-spacing:-0.406px;">seleccionar</div><div class="t" style="left:1191.00px;top:106px;font-size:12.5px;font-weight:400;color:#262626;letter-spacing:-0.256px;">Complementos</div><div class="t" style="left:919.00px;top:72px;font-size:12.5px;font-weight:400;color:#262626;letter-spacing:-0.316px;">Insertar</div><div class="t" style="left:919.00px;top:95px;font-size:12.5px;font-weight:400;color:#262626;letter-spacing:-0.141px;">Eliminar</div><div class="t" style="left:919.00px;top:118px;font-size:12.5px;font-weight:400;color:#262626;letter-spacing:-0.265px;">Formato</div><div class="t" style="left:108.00px;top:80px;font-size:12.5px;font-weight:400;color:#262626;letter-spacing:-0.275px;">Calibri</div><div class="t" style="left:232.50px;top:80px;font-size:12px;font-weight:400;color:#262626;letter-spacing:-1.212px;transform:scaleX(0.8827);transform-origin:0 0;">12</div><div class="t" style="left:521.00px;top:80px;font-size:12.5px;font-weight:400;color:#262626;letter-spacing:-0.782px;">General</div><div class="t" style="left:12.00px;top:174px;font-size:12.5px;font-weight:400;color:#262626;letter-spacing:-0.877px;transform:scaleX(0.9241);transform-origin:0 0;">C5</div><div class="t" style="left:232.00px;top:207px;font-size:12.5px;font-weight:400;color:#262626;letter-spacing:0.000px;">A</div><div class="t" style="left:652.00px;top:207px;font-size:12.5px;font-weight:400;color:#262626;letter-spacing:0.000px;">B</div><div class="t" style="left:1074.00px;top:207px;font-size:12.5px;font-weight:400;color:#217346;letter-spacing:0.000px;">C</div><div class="t" style="left:9.50px;top:269px;font-size:12.5px;font-weight:400;color:#262626;letter-spacing:0.000px;">1</div><div class="t" style="left:9.50px;top:331px;font-size:12.5px;font-weight:400;color:#262626;letter-spacing:0.000px;">2</div><div class="t" style="left:9.50px;top:393px;font-size:12.5px;font-weight:400;color:#262626;letter-spacing:0.000px;">3</div><div class="t" style="left:9.50px;top:455px;font-size:12.5px;font-weight:400;color:#262626;letter-spacing:0.000px;">4</div><div class="t" style="left:9.50px;top:517px;font-size:12.5px;font-weight:400;color:#217346;letter-spacing:0.000px;">5</div><div class="t" style="left:9.50px;top:579px;font-size:12.5px;font-weight:400;color:#262626;letter-spacing:0.000px;">6</div><div class="t" style="left:9.50px;top:641px;font-size:12.5px;font-weight:400;color:#262626;letter-spacing:0.000px;">7</div><div class="t" style="left:28.00px;top:246px;font-size:14px;font-weight:700;color:#000;letter-spacing:-0.174px;transform:scaleX(0.9712);transform-origin:0 0;">FECHA ACTUALIZACIÓN DE LA INFORMACIÓN</div><div class="t" style="left:28.00px;top:308px;font-size:14px;font-weight:700;color:#000;letter-spacing:-0.145px;transform:scaleX(0.9753);transform-origin:0 0;">PERIODICIDAD DE ACTUALIZACIÓN DE LA INFORMACIÓN</div><div class="t" style="left:28.00px;top:370px;font-size:14px;font-weight:700;color:#000;letter-spacing:-0.108px;transform:scaleX(0.9823);transform-origin:0 0;">UNIDAD POSEEDORA DE LA INFORMACIÓN</div><div class="t" style="left:28.00px;top:422px;font-size:14px;font-weight:700;color:#000;letter-spacing:-0.203px;transform:scaleX(0.9673);transform-origin:0 0;">PERSONA RESPONSABLE DE LA UNIDAD POSEEDORA DE LA</div><div class="t" style="left:28.00px;top:443px;font-size:14px;font-weight:700;color:#000;letter-spacing:-0.049px;transform:scaleX(0.9927);transform-origin:0 0;">INFORMACIÓN</div><div class="t" style="left:28.00px;top:484px;font-size:14px;font-weight:700;color:#000;letter-spacing:-0.277px;transform:scaleX(0.9560);transform-origin:0 0;">CORREO ELECTRÓNICO DE LA PERSONA RESPONSABLE DE LA</div><div class="t" style="left:28.00px;top:505px;font-size:14px;font-weight:700;color:#000;letter-spacing:-0.108px;transform:scaleX(0.9823);transform-origin:0 0;">UNIDAD POSEEDORA DE LA INFORMACIÓN</div><div class="t" style="left:28.00px;top:546px;font-size:14px;font-weight:700;color:#000;letter-spacing:-0.203px;transform:scaleX(0.9672);transform-origin:0 0;">NÚMERO TELEFÓNICO DE LA PERSONA RESPONSABLE DE LA</div><div class="t" style="left:28.00px;top:567px;font-size:14px;font-weight:700;color:#000;letter-spacing:-0.108px;transform:scaleX(0.9823);transform-origin:0 0;">UNIDAD POSEEDORA DE LA INFORMACIÓN</div><div class="t" style="left:28.00px;top:618px;font-size:14px;font-weight:700;color:#000;letter-spacing:-0.427px;transform:scaleX(0.9364);transform-origin:0 0;">LICENCIA</div><div class="t" style="left:623.50px;top:246px;font-size:14px;font-weight:400;color:#000;letter-spacing:0.239px;transform:scaleX(1.0480);transform-origin:0 0;">24/8/2024</div><div class="t" style="left:624.64px;top:308px;font-size:14px;font-weight:400;color:#ff0000;letter-spacing:-0.276px;transform:scaleX(0.9642);transform-origin:0 0;">MENSUAL</div><div class="t" style="left:617.00px;top:370px;font-size:14px;font-weight:400;color:#000;letter-spacing:-0.430px;transform:scaleX(0.9388);transform-origin:0 0;">SECRETARÍA</div><div class="t" style="left:604.70px;top:432px;font-size:14px;font-weight:400;color:#000;letter-spacing:-0.357px;transform:scaleX(0.9505);transform-origin:0 0;">WENDY SÁCHEZ</div><div class="t" style="left:566.03px;top:494px;font-size:14px;font-weight:400;color:#0000ff;letter-spacing:0.140px;transform:scaleX(1.0298);transform-origin:0 0;">wendicita_jaz@hotmail.com</div><div class="t" style="left:617.40px;top:556px;font-size:14px;font-weight:400;color:#000;letter-spacing:0.050px;transform:scaleX(1.0086);transform-origin:0 0;">0990228409</div><div class="t" style="left:625.00px;top:618px;font-size:14px;font-weight:400;color:#000;letter-spacing:-0.092px;transform:scaleX(0.9837);transform-origin:0 0;">CC-BY-4.0</div><div class="t" style="left:115.00px;top:677px;font-size:12.5px;font-weight:400;color:#262626;letter-spacing:0.424px;">Conjunto de datos</div><div class="t" style="left:250.00px;top:677px;font-size:12.5px;font-weight:700;color:#217346;letter-spacing:0.392px;">Metadatos</div><div class="t" style="left:340.00px;top:677px;font-size:12.5px;font-weight:400;color:#262626;letter-spacing:0.312px;">Diccionario</div><div class="t" style="left:11.50px;top:703px;font-size:12px;font-weight:400;color:#262626;letter-spacing:-0.343px;transform:scaleX(0.9258);transform-origin:0 0;">Listo</div><div class="t" style="left:73.00px;top:703px;font-size:12px;font-weight:700;color:#262626;letter-spacing:-0.160px;transform:scaleX(0.9017);transform-origin:0 0;">Accesibilidad: es necesario investigar</div><div class="t" style="left:1332.00px;top:703px;font-size:12px;font-weight:400;color:#262626;letter-spacing:-0.742px;transform:scaleX(0.9029);transform-origin:0 0;">100%</div><div class="t" style="left:346.00px;top:737px;font-size:13px;font-weight:400;color:#5d5d5d;letter-spacing:0.240px;">Búsqueda</div><div class="t" style="left:1171.00px;top:730px;font-size:12px;font-weight:400;color:#fff;letter-spacing:-0.891px;transform:scaleX(0.8998);transform-origin:0 0;">ESP</div><div class="t" style="left:1171.00px;top:746px;font-size:12px;font-weight:400;color:#fff;letter-spacing:-0.576px;transform:scaleX(0.9292);transform-origin:0 0;">LAA</div><div class="t" style="left:1294.00px;top:730px;font-size:12px;font-weight:400;color:#fff;letter-spacing:-0.339px;">16:27</div><div class="t" style="left:1267.00px;top:746px;font-size:12px;font-weight:400;color:#fff;letter-spacing:0.286px;">24/1/2024</div>
</body></html>
